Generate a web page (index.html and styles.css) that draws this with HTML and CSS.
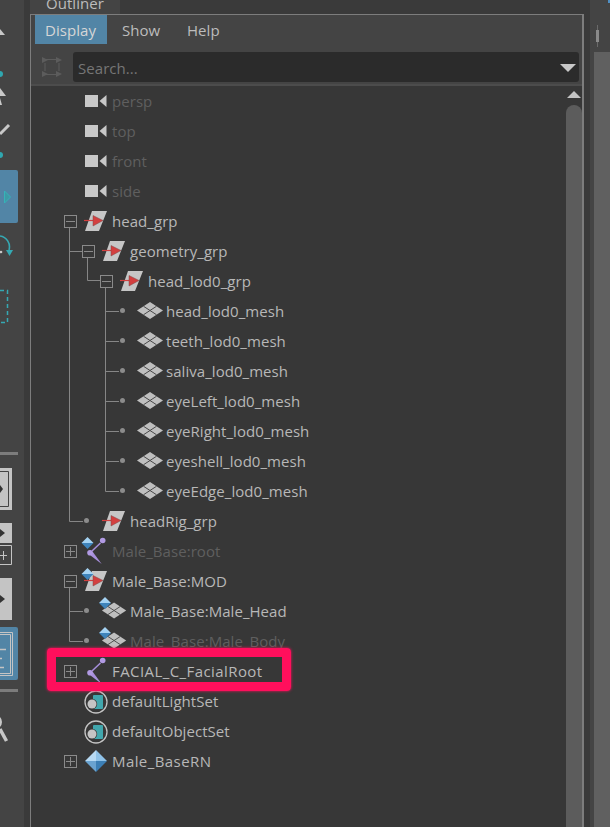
FILE: index.html
```html
<!DOCTYPE html>
<html lang="en">
<head>
<meta charset="utf-8">
<title>Outliner</title>
<link rel="stylesheet" href="styles.css">
</head>
<body>
<svg class="defs" width="0" height="0" aria-hidden="true">
  <defs>
    <symbol id="cam" viewBox="0 0 28 30"><rect x="1" y="9" width="13" height="12" fill="#c8c8c8"/><path d="M15.500 15 22.500 9V21Z" fill="#c8c8c8"/></symbol>
    <symbol id="grp" viewBox="0 0 28 30"><path d="M8 5H23L15 25H1Z" fill="#c6c6c6"/><path d="M0 14.500H10" stroke="#d23f3f" stroke-width="1.200"/><path d="M9 9.500 19 14.500 9 20Z" fill="#d33f3f" stroke="#7a4a4a" stroke-width=".5"/></symbol>
    <symbol id="mesh" viewBox="-2 0 30 30"><path d="M12 6 25 14.500 12 23-1 14.500Z" fill="#bfbfbf"/><path d="M5.500 10.250 18.500 18.750M18.500 10.250 5.500 18.750" stroke="#4a4a4a" stroke-width="1"/></symbol>
    <symbol id="badge" viewBox="0 0 14 14"><path d="M7 0 14 7H0Z" fill="#a5d3f3"/><path d="M0 7H14L7 14Z" fill="#3f84bb"/></symbol>
    <symbol id="joint" viewBox="0 0 28 30"><path d="M16.500 7 8 15" stroke="#a78fdb" stroke-width="1.500" fill="none"/><path d="M8.500 15.500 6.500 19.500 17.700 28Z" fill="#a78fdb"/><circle cx="18.700" cy="4.500" r="2.800" fill="#b19ae3"/><circle cx="6" cy="16.700" r="2.800" fill="#b19ae3"/></symbol>
    <symbol id="set" viewBox="0 0 28 30"><circle cx="12" cy="16" r="11" fill="none" stroke="#c4c4c4" stroke-width="1.300"/><rect x="9" y="9" width="10" height="14" rx="1" fill="#41a7ad"/><circle cx="8" cy="18" r="5.200" fill="#373737"/><circle cx="8" cy="18" r="4.500" fill="#c4c4c4"/></symbol>
    <symbol id="ref" viewBox="0 0 28 30"><path d="M12 4 1 15H12Z" fill="#b7daf4"/><path d="M12 4 23 15H12Z" fill="#8fc2e8"/><path d="M1 15H12V26Z" fill="#6aa3d0"/><path d="M23 15H12V26Z" fill="#3c7fb5"/></symbol>
  </defs>
</svg>
<div class="app">
  <aside class="toolbar">
    <svg class="toolbar-art" width="24" height="827" viewBox="0 0 24 827" aria-hidden="true">
      <path d="M0 29 5 35H0Z" fill="#c8c8c8"/>
      <circle cx="0" cy="74" r="3" fill="#2fa7b0"/>
      <path d="M0 88 6 96H0ZM0 98 2 105H0Z" fill="#c8c8c8"/>
      <path d="M0 134 9 125" stroke="#c8c8c8" stroke-width="3"/>
      <circle cx="0" cy="155" r="3" fill="#2fa7b0"/>
      <rect x="-4" y="170" width="22" height="53" rx="2" fill="#5285a6"/>
      <path d="M4.500 191 10.500 197 4.500 203Z" fill="#3d9aa6" stroke="#35b3b9"/>
      <path d="M0 236A11 11 0 0 1 9 250" fill="none" stroke="#35a9b3" stroke-width="1.600"/>
      <path d="M6 250H13L9.500 256Z" fill="#35a9b3"/>
      <circle cx="1" cy="252" r="1.300" fill="#c8c8c8"/>
      <path d="M0 290.500H7.500V322.500H0" fill="none" stroke="#35a9b3" stroke-width="1.500" stroke-dasharray="4 3"/>
      <rect y="452" width="18" height="3" fill="#7c7c7c"/>
      <rect y="468" width="12" height="42" fill="#c4c4c4"/>
      <path d="M0 471.500H8.500V506.500H0" fill="none" stroke="#444"/>
      <path d="M0 485 3 489 0 493Z" fill="#333"/>
      <rect y="523" width="12" height="20" fill="#c4c4c4"/>
      <path d="M0 529 5 533 0 537Z" fill="#333"/>
      <path d="M0 545.500H11.500V564.500H0" fill="none" stroke="#c4c4c4"/>
      <path d="M0 555.500H7M3.500 551V560" stroke="#c4c4c4"/>
      <rect y="578" width="12" height="42" fill="#c4c4c4"/>
      <path d="M0 595 5 599 0 603Z" fill="#333"/>
      <rect x="-4" y="627" width="22" height="53" rx="2" fill="#5285a6"/>
      <path d="M0 632.500H12.500V675.500H0M0 634.500H10.500V673.500H0" fill="none" stroke="#c4c4c4"/>
      <path d="M0 649.500H6M0 658.500H2M0 667.500H4" stroke="#c4c4c4" stroke-width="1.500"/>
      <rect y="689" width="18" height="3" fill="#7c7c7c"/>
      <path d="M0 729 6.500 741" stroke="#c8c8c8" stroke-width="3.500"/>
      <circle cx="-5" cy="722" r="6" fill="none" stroke="#c8c8c8" stroke-width="2"/>
    </svg>
  </aside>
  <main class="workspace">
    <div class="tabstrip"><div class="tab">Outliner</div></div>
    <section class="panel">
      <nav class="menubar">
        <span class="menu menu-active">Display</span>
        <span class="menu">Show</span>
        <span class="menu">Help</span>
      </nav>
      <div class="searchbar">
        <svg class="filter-icon" width="22" height="24" viewBox="0 0 22 24" aria-hidden="true">
          <path d="M1 2 7 5 1 8ZM1 16 7 19 1 22ZM15 2 21 5 15 8ZM15 16 21 19 15 22Z" fill="#5c5c5c"/>
          <path d="M5 4.500H17M4 8V16M18 8V16M5 19.500H17" stroke="#5c5c5c" fill="none"/>
        </svg>
        <div class="search-field">
          <span class="search-text">Search...</span>
          <svg width="16" height="8" viewBox="0 0 16 8" aria-hidden="true"><path d="M0 0H16L8 8Z" fill="#c8c8c8"/></svg>
        </div>
      </div>
      <div class="tree-wrap">
        <div class="tree">
          <svg class="connectors" width="130" height="741" viewBox="0 0 130 741" aria-hidden="true">
            <g stroke="#868686" fill="none">
              <path d="M38.500 142V435.500H52M38.500 165.500H51"/>
              <path d="M56.500 172V194.500H69"/>
              <path d="M74.500 202V405.500H88M74.500 225.500H88M74.500 255.500H88M74.500 285.500H88M74.500 315.500H88M74.500 345.500H88M74.500 375.500H88"/>
              <path d="M38.500 502V555.500H52M38.500 525.500H52"/>
            </g>
          </svg>
          <div class="row l0"><span class="slot"></span><svg class="ic"><use href="#cam" width="28" height="30"/></svg><span class="lbl dim">persp</span></div>
          <div class="row l0"><span class="slot"></span><svg class="ic"><use href="#cam" width="28" height="30"/></svg><span class="lbl dim">top</span></div>
          <div class="row l0"><span class="slot"></span><svg class="ic"><use href="#cam" width="28" height="30"/></svg><span class="lbl dim">front</span></div>
          <div class="row l0"><span class="slot"></span><svg class="ic"><use href="#cam" width="28" height="30"/></svg><span class="lbl dim">side</span></div>

          <div class="row l0"><span class="slot"><i class="box minus"></i></span><svg class="ic"><use href="#grp" width="28" height="30"/></svg><span class="lbl">head_grp</span></div>
          <div class="row l1"><span class="slot"><i class="box minus"></i></span><svg class="ic"><use href="#grp" width="28" height="30"/></svg><span class="lbl">geometry_grp</span></div>
          <div class="row l2"><span class="slot"><i class="box minus"></i></span><svg class="ic"><use href="#grp" width="28" height="30"/></svg><span class="lbl">head_lod0_grp</span></div>
          <div class="row l3"><span class="slot"><i class="dot"></i></span><svg class="ic"><use href="#mesh" x="-2" width="30" height="30"/></svg><span class="lbl">head_lod0_mesh</span></div>
          <div class="row l3"><span class="slot"><i class="dot"></i></span><svg class="ic"><use href="#mesh" x="-2" width="30" height="30"/></svg><span class="lbl">teeth_lod0_mesh</span></div>
          <div class="row l3"><span class="slot"><i class="dot"></i></span><svg class="ic"><use href="#mesh" x="-2" width="30" height="30"/></svg><span class="lbl">saliva_lod0_mesh</span></div>
          <div class="row l3"><span class="slot"><i class="dot"></i></span><svg class="ic"><use href="#mesh" x="-2" width="30" height="30"/></svg><span class="lbl">eyeLeft_lod0_mesh</span></div>
          <div class="row l3"><span class="slot"><i class="dot"></i></span><svg class="ic"><use href="#mesh" x="-2" width="30" height="30"/></svg><span class="lbl">eyeRight_lod0_mesh</span></div>
          <div class="row l3"><span class="slot"><i class="dot"></i></span><svg class="ic"><use href="#mesh" x="-2" width="30" height="30"/></svg><span class="lbl">eyeshell_lod0_mesh</span></div>
          <div class="row l3"><span class="slot"><i class="dot"></i></span><svg class="ic"><use href="#mesh" x="-2" width="30" height="30"/></svg><span class="lbl">eyeEdge_lod0_mesh</span></div>
          <div class="row l1"><span class="slot"><i class="dot"></i></span><svg class="ic"><use href="#grp" width="28" height="30"/></svg><span class="lbl">headRig_grp</span></div>

          <div class="row l0"><span class="slot"><i class="box plus"></i></span><svg class="ic"><use href="#joint" width="28" height="30"/><use href="#badge" x="-3" y="1" width="13" height="12"/></svg><span class="lbl dim">Male_Base:root</span></div>
          <div class="row l0"><span class="slot"><i class="box minus"></i></span><svg class="ic"><use href="#grp" width="28" height="30"/><use href="#badge" x="-3" y="2" width="13" height="12"/></svg><span class="lbl">Male_Base:MOD</span></div>
          <div class="row l1"><span class="slot"><i class="dot"></i></span><svg class="ic"><use href="#mesh" x="-1" y="1" width="28" height="28"/><use href="#badge" x="-3" y="1" width="12" height="12"/></svg><span class="lbl">Male_Base:Male_Head</span></div>
          <div class="row l1"><span class="slot"><i class="dot"></i></span><svg class="ic"><use href="#mesh" x="-1" y="1" width="28" height="28"/><use href="#badge" x="-3" y="1" width="12" height="12"/></svg><span class="lbl dim">Male_Base:Male_Body</span></div>
          <div class="row l0"><span class="slot"><i class="box plus"></i></span><svg class="ic"><use href="#joint" width="28" height="30"/></svg><span class="lbl wide">FACIAL_C_FacialRoot</span></div>
          <div class="row l0"><span class="slot"></span><svg class="ic"><use href="#set" width="28" height="30"/></svg><span class="lbl">defaultLightSet</span></div>
          <div class="row l0"><span class="slot"></span><svg class="ic"><use href="#set" width="28" height="30"/></svg><span class="lbl">defaultObjectSet</span></div>
          <div class="row l0"><span class="slot"><i class="box plus"></i></span><svg class="ic"><use href="#ref" width="28" height="30"/></svg><span class="lbl wide">Male_BaseRN</span></div>
          <div class="highlight"></div>
        </div>
        <div class="scrollbar">
          <svg width="14" height="7" viewBox="0 0 14 7" class="scroll-up" aria-hidden="true"><path d="M7 0 14 7H0Z" fill="#c4c4c4"/></svg>
          <div class="thumb"></div>
        </div>
      </div>
    </section>
  </main>
  <aside class="dock">
    <div class="dock-gap"></div>
    <div class="dock-side">
      <div class="dock-head"><i class="handle"></i></div>
      <div class="dock-body"></div>
    </div>
  </aside>
</div>
</body>
</html>
```
FILE: styles.css
```css
* { box-sizing: border-box; }
html, body { margin: 0; padding: 0; height: 827px; overflow: hidden; background: #3a3a3a; }
body { font-family: "Open Sans", "Noto Sans", sans-serif; font-size: 15px; color: #bcbcbc; letter-spacing: .05px; }
.defs { position: absolute; }
.app { display: flex; height: 827px; }

.toolbar { width: 24px; background: #444; flex: none; }
.toolbar-art { display: block; }

.workspace { width: 560px; flex: none; padding-left: 6px; display: flex; flex-direction: column; }
.tabstrip { height: 14px; overflow: hidden; }
.tab { width: 90px; height: 14px; background: #444; padding-left: 16px; line-height: 7px; color: #bcbcbc; }

.panel { flex: 1; border: solid #7d7d7d; border-width: 1px 2px 0 1px; background: #444; width: 554px; display: flex; flex-direction: column; min-height: 0; }
.menubar { height: 29px; padding-left: 4px; display: flex; background: #444; flex: none; }
.menu { display: flex; align-items: center; width: 72px; padding-left: 10px; }
.menu:nth-child(2) { width: 70px; padding-left: 15px; }
.menu:nth-child(3) { padding-left: 10px; }
.menu-active { background: #5285a6; color: #d6d6d6; }

.searchbar { height: 42px; padding: 8px 3px 0 10px; display: flex; gap: 10px; flex: none; border-bottom: 2px solid #4c4c4c; }
.filter-icon { flex: none; margin-top: 3px; }
.search-field { flex: 1; height: 30px; background: #2b2b2b; border-radius: 3px; padding: 2px 3px 0 5px; display: flex; align-items: center; justify-content: space-between; }
.search-text { color: #767676; }

.tree-wrap { flex: 1; display: flex; background: #373737; min-height: 0; }
.tree { position: relative; width: 535px; flex: none; }
.connectors { position: absolute; left: 0; top: 0; pointer-events: none; }
.row { height: 30px; display: flex; align-items: center; position: relative; white-space: nowrap; }
.l0 { padding-left: 33px; }
.l1 { padding-left: 51px; }
.l2 { padding-left: 69px; }
.l3 { padding-left: 87px; }
.slot { width: 20px; height: 30px; flex: none; display: flex; align-items: center; }
.ic { width: 28px; height: 30px; flex: none; overflow: visible; }
.lbl { color: #b8b8b8; }
.dim { color: #5f5f5f; }
.wide { letter-spacing: .42px; }

.box { display: block; width: 13px; height: 13px; border: 1px solid #8a8a8a; position: relative; background: #373737; }
.box::before { content: ""; position: absolute; left: 1px; right: 1px; top: 5px; height: 1px; background: #8a8a8a; }
.plus::after { content: ""; position: absolute; top: 1px; bottom: 1px; left: 5px; width: 1px; background: #8a8a8a; }
.dot { display: block; width: 5px; height: 5px; border-radius: 50%; background: #8c8c8c; margin-left: 2px; margin-top: -1px; }

.highlight { position: absolute; left: 16px; top: 562px; width: 244px; height: 43px; border: 9px solid #ff0f5c; border-radius: 4px; box-shadow: 0 0 3px #ff0f5c; }

.scrollbar { width: 16px; flex: none; display: flex; flex-direction: column; align-items: center; }
.scroll-up { margin-top: 5px; flex: none; }
.thumb { flex: 1; width: 16px; margin-top: 7px; background: #5c5c5c; border-radius: 8px 8px 0 0; }

.dock { flex: 1; display: flex; }
.dock-gap { width: 6px; flex: none; background: #3a3a3a; }
.dock-side { flex: 1; background: #444; padding-left: 4px; display: flex; flex-direction: column; }
.dock-head { height: 52px; position: relative; flex: none; }
.dock-head::after { content: ""; position: absolute; right: 0; top: 0; width: 2px; height: 3px; background: #4f8fc4; }
.handle { position: absolute; left: 2px; top: 30px; width: 3px; height: 12px; background: #8a8a8a; box-shadow: 0 -6px 0 -1px #6a6a6a, 0 6px 0 -1px #6a6a6a; }
.dock-body { flex: 1; background: #606060; }
```
